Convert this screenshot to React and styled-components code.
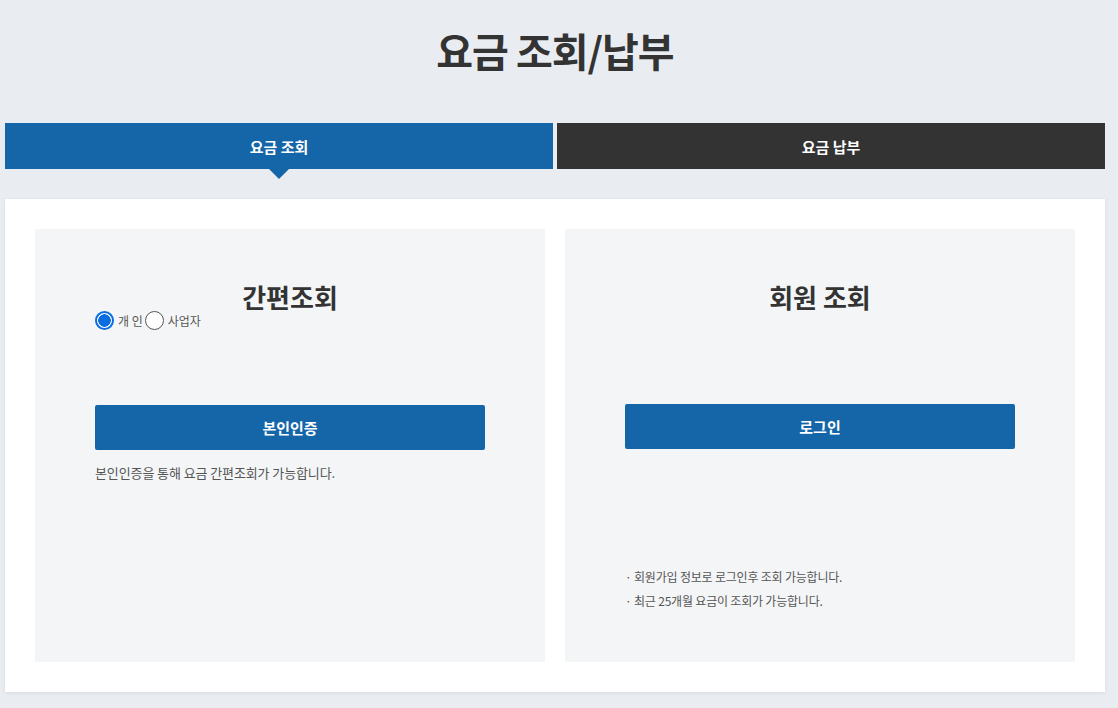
import React, { useState } from "react";
import styled, { createGlobalStyle } from "styled-components";

const Global = createGlobalStyle`
  html, body { margin: 0; padding: 0; background: #e9edf2; }
  body { font-family: "Noto Sans CJK KR", "Noto Sans", sans-serif; color: #333; }
  * { box-sizing: border-box; }
`;

const Page = styled.div`
  width: 1118px;
  height: 708px;
  padding: 0 13px 0 5px;
  overflow: hidden;
`;

const Title = styled.h1`
  margin: 0;
  height: 123px;
  padding-top: 22px;
  text-align: center;
  font-size: 40px;
  font-weight: 700;
  letter-spacing: -1px;
  color: #333;
  line-height: 56px;
`;

const Tabs = styled.div`
  display: grid;
  grid-template-columns: 1fr 1fr;
  gap: 4px;
  height: 46px;
`;

const Tab = styled.div`
  position: relative;
  display: flex;
  align-items: center;
  justify-content: center;
  background: ${(p) => (p.$active ? "#1565a9" : "#333333")};
  color: #fff;
  font-size: 15px;
  font-weight: 700;
  &::after {
    content: "";
    display: ${(p) => (p.$active ? "block" : "none")};
    position: absolute;
    left: 50%;
    top: 100%;
    transform: translateX(-50%);
    border-left: 10px solid transparent;
    border-right: 10px solid transparent;
    border-top: 10px solid #1565a9;
  }
`;

const Card = styled.div`
  margin-top: 30px;
  background: #fff;
  padding: 30px;
  display: grid;
  grid-template-columns: 1fr 1fr;
  gap: 20px;
  box-shadow: 0 1px 4px rgba(0, 0, 0, 0.08);
`;

const Panel = styled.div`
  background: #f4f5f7;
  height: 433px;
  padding: 50px 60px 0;
  display: flex;
  flex-direction: column;
`;

const PanelTitle = styled.h2`
  margin: 0;
  text-align: center;
  font-size: 26px;
  font-weight: 700;
  color: #333;
  line-height: 36px;
`;

const RadioRow = styled.div`
  display: flex;
  align-items: center;
  height: 20px;
  margin-top: -5px;
  font-size: 12px;
  color: #555;
`;

const RadioLabel = styled.label`
  display: flex;
  align-items: center;
  gap: 4px;
  margin-right: 2px;
  cursor: pointer;
`;

const Radio = styled.input.attrs({ type: "radio" })`
  appearance: none;
  margin: 0;
  width: 19px;
  height: 19px;
  border-radius: 50%;
  border: 1px solid #555;
  background: #fff;
  &:checked {
    border: 2px solid #0b6ee0;
    background: radial-gradient(circle, #0b6ee0 0 6px, #fff 6.5px);
  }
`;

const Button = styled.button`
  height: 45px;
  width: 100%;
  margin-top: ${(p) => p.$mt}px;
  border: none;
  border-radius: 2px;
  background: #1565a9;
  color: #fff;
  font-family: inherit;
  font-size: 15px;
  font-weight: 700;
  cursor: pointer;
`;

const Desc = styled.p`
  margin: 13px 0 0;
  font-size: 13px;
  color: #555;
  letter-spacing: -0.1px;
`;

const Notes = styled.ul`
  list-style: none;
  margin: 116px 0 0;
  padding: 0;
  font-size: 12px;
  color: #555;
  letter-spacing: -0.2px;
  li {
    line-height: 24px;
  }
  li::before {
    content: "· ";
  }
`;

export default function App() {
  const [type, setType] = useState("p");
  return (
    <Page>
      <Global />
      <Title>요금 조회/납부</Title>
      <Tabs>
        <Tab $active>요금 조회</Tab>
        <Tab>요금 납부</Tab>
      </Tabs>
      <Card>
        <Panel>
          <PanelTitle>간편조회</PanelTitle>
          <RadioRow>
            <RadioLabel>
              <Radio name="t" checked={type === "p"} onChange={() => setType("p")} />
              개 인
            </RadioLabel>
            <RadioLabel>
              <Radio name="t" checked={type === "b"} onChange={() => setType("b")} />
              사업자
            </RadioLabel>
          </RadioRow>
          <Button $mt={75}>본인인증</Button>
          <Desc>본인인증을 통해 요금 간편조회가 가능합니다.</Desc>
        </Panel>
        <Panel>
          <PanelTitle>회원 조회</PanelTitle>
          <Button $mt={89}>로그인</Button>
          <Notes>
            <li>회원가입 정보로 로그인후 조회 가능합니다.</li>
            <li>최근 25개월 요금이 조회가 가능합니다.</li>
          </Notes>
        </Panel>
      </Card>
    </Page>
  );
}
